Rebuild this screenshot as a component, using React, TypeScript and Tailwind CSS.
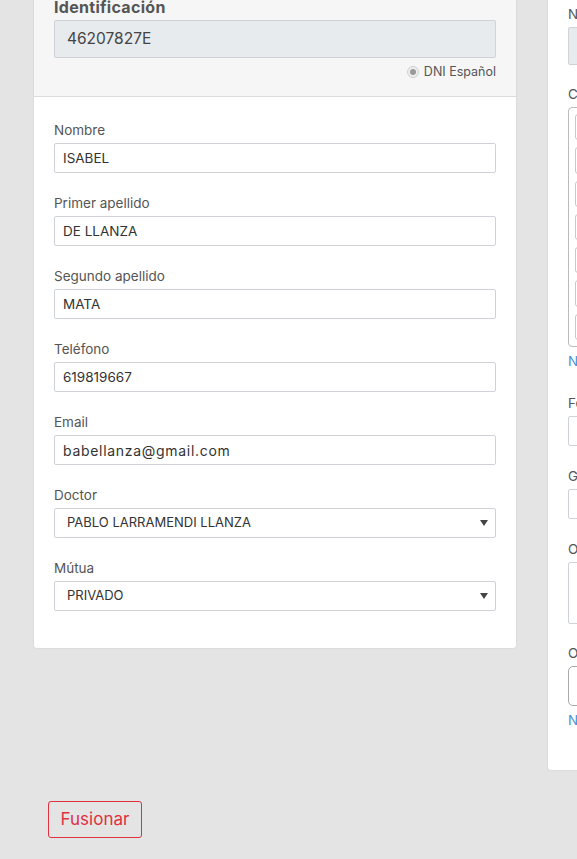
const fields = [
  { label: "Nombre", value: "ISABEL" },
  { label: "Primer apellido", value: "DE LLANZA" },
  { label: "Segundo apellido", value: "MATA" },
  { label: "Teléfono", value: "619819667" },
  { label: "Email", value: "babellanza@gmail.com", wide: true },
];

const selects = [
  { label: "Doctor", value: "PABLO LARRAMENDI LLANZA" },
  { label: "Mútua", value: "PRIVADO" },
];

function Label({ children }: { children: React.ReactNode }) {
  return <div className="mb-1 h-[18px] text-[13.5px] leading-[18px] text-[#555]">{children}</div>;
}

function Caret() {
  return (
    <svg width="8" height="6" viewBox="0 0 8 6" className="fill-[#444]">
      <path d="M0 0h8L4 6z" />
    </svg>
  );
}

function PatientCard() {
  return (
    <div className="w-[482px] shrink-0 rounded-[3px] bg-white shadow-[0_0_0_1px_#dcdcdc]">
      <div className="border-b border-[#dcdcdc] bg-[#f6f6f6] px-5 pt-5 pb-4">
        <h2 className="mb-[2px] text-[16px] leading-[21px] font-bold tracking-[0.3px] text-[#555]">Identificación</h2>
        <div className="flex h-[38px] items-center rounded-[2px] border border-[#cfd3d8] bg-[#e8ebee] px-3 text-[15.5px] text-[#444]">
          46207827E
        </div>
        <div className="mt-[6px] flex items-center justify-end gap-[5px] text-[12.5px] leading-[16px] text-[#555]">
          <span className="flex h-3 w-3 items-center justify-center rounded-full border border-[#cfcfcf] bg-[#eee]">
            <span className="h-[6px] w-[6px] rounded-full bg-[#9a9a9a]" />
          </span>
          DNI Español
        </div>
      </div>

      <div className="px-5 pt-6 pb-[37px]">
        {fields.map((f) => (
          <div key={f.label} className="mb-[21px]">
            <Label>{f.label}</Label>
            <div
              className={`flex h-[30px] items-center rounded-[2px] border border-[#cfd3d8] px-2 text-[#333] ${
                f.wide ? "text-[14px] tracking-[0.7px]" : "text-[13.5px]"
              }`}
            >
              {f.value}
            </div>
          </div>
        ))}
        {selects.map((s, i) => (
          <div key={s.label} className={i === 0 ? "mb-[21px]" : ""}>
            <Label>{s.label}</Label>
            <div className="flex h-[30px] items-center justify-between rounded-[2px] border border-[#cfd3d8] pr-[7px] pl-3 text-[13px] text-[#333]">
              <span>{s.value}</span>
              <Caret />
            </div>
          </div>
        ))}
      </div>
    </div>
  );
}

function SideCard() {
  return (
    <div className="w-[360px] shrink-0 rounded-[3px] bg-white px-5 pt-7 pb-[41px] text-[13.5px] leading-[18px] text-[#555] shadow-[0_0_0_1px_#dcdcdc]">
      <div className="mb-1 h-[18px]">Nº Historia</div>
      <div className="mb-[20px] h-[38px] rounded-[2px] border border-[#cfd3d8] bg-[#e8ebee]" />

      <div className="mb-1 h-[18px]">Consentimientos</div>
      <div className="flex h-[240px] flex-col gap-[7px] rounded-[4px] border border-[#bbb] px-[6px] py-[6px]">
        {Array.from({ length: 7 }).map((_, i) => (
          <div key={i} className="h-[27px] rounded-[3px] border border-[#c8c8c8]" />
        ))}
      </div>
      <div className="mt-[5px] mb-[24px] h-[18px] text-[#4a90d9]">Nuevo consentimiento</div>

      <div className="mb-1 h-[18px]">Fecha de nacimiento</div>
      <div className="mb-[21px] h-[30px] rounded-[2px] border border-[#cfd3d8]" />

      <div className="mb-1 h-[18px]">Género</div>
      <div className="mb-[21px] h-[30px] rounded-[2px] border border-[#cfd3d8]" />

      <div className="mb-1 h-[18px]">Observaciones</div>
      <div className="mb-[20px] h-[62px] rounded-[2px] border border-[#cfd3d8]" />

      <div className="mb-1 h-[18px]">Otros datos</div>
      <div className="h-[40px] rounded-[5px] border border-[#aaa]" />
      <div className="mt-[5px] h-[18px] text-[#4a90d9]">Nueva nota</div>
    </div>
  );
}

export default function App() {
  return (
    <div className="h-[859px] w-[577px] overflow-hidden bg-[#e4e4e4] font-['Inter','Liberation_Sans',sans-serif]">
      <div className="-mt-[23px] flex items-start gap-8 pl-[34px]">
        <PatientCard />
        <SideCard />
      </div>
      <button className="mt-[31px] ml-[48px] h-[37px] w-[94px] rounded-[3px] border border-[#e0313f] text-[17px] text-[#e0313f]">
        Fusionar
      </button>
    </div>
  );
}
